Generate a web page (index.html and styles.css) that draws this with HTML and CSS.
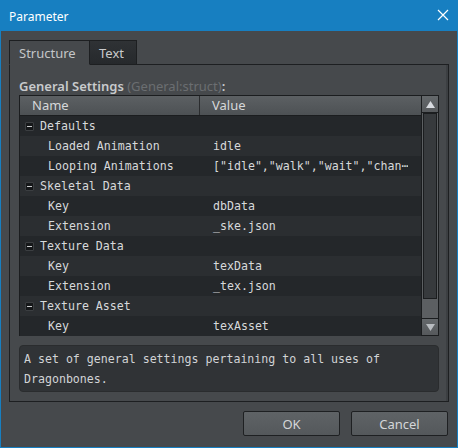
FILE: index.html
```html
<!DOCTYPE html>
<html>
<head>
<meta charset="utf-8">
<link rel="stylesheet" href="styles.css">
</head>
<body>
<div class="window">
  <div class="titlebar">
    <span class="title">Parameter</span>
    <svg class="close" width="12" height="12" viewBox="0 0 12 12"><path d="M1 1 L11 11 M11 1 L1 11" stroke="#ffffff" stroke-width="1.2" fill="none"/></svg>
  </div>
  <div class="content">
    <div class="tabs">
      <div class="tab active">Structure</div>
      <div class="tab">Text</div>
    </div>
    <div class="panel">
      <div class="label">General Settings <span class="type">(General:struct)</span>:</div>
      <div class="tree">
        <div class="tree-main">
          <div class="head">
            <div class="hname">Name</div>
            <div class="hvalue">Value</div>
          </div>
          <div class="row dark group"><div class="name"><span class="toggle"></span>Defaults</div><div class="value"></div></div>
          <div class="row light"><div class="name child">Loaded Animation</div><div class="value">idle</div></div>
          <div class="row dark"><div class="name child">Looping Animations</div><div class="value">["idle","walk","wait","chan⋯</div></div>
          <div class="row light group"><div class="name"><span class="toggle"></span>Skeletal Data</div><div class="value"></div></div>
          <div class="row dark"><div class="name child">Key</div><div class="value">dbData</div></div>
          <div class="row light"><div class="name child">Extension</div><div class="value">_ske.json</div></div>
          <div class="row dark group"><div class="name"><span class="toggle"></span>Texture Data</div><div class="value"></div></div>
          <div class="row light"><div class="name child">Key</div><div class="value">texData</div></div>
          <div class="row dark"><div class="name child">Extension</div><div class="value">_tex.json</div></div>
          <div class="row light group"><div class="name"><span class="toggle"></span>Texture Asset</div><div class="value"></div></div>
          <div class="row dark"><div class="name child">Key</div><div class="value">texAsset</div></div>
        </div>
        <div class="scrollbar">
          <div class="sbtn"><svg width="9" height="7" viewBox="0 0 9 7"><path d="M4.5 0 L9 7 L0 7 Z" fill="#d8dbe0"/></svg></div>
          <div class="track"><div class="thumb"></div></div>
          <div class="sbtn"><svg width="9" height="7" viewBox="0 0 9 7"><path d="M0 0 L9 0 L4.5 7 Z" fill="#b8bcc0"/></svg></div>
        </div>
      </div>
      <div class="desc">A set of general settings pertaining to all uses of<br>Dragonbones.</div>
    </div>
    <div class="buttons">
      <div class="btn">OK</div>
      <div class="btn">Cancel</div>
    </div>
  </div>
</div>
</body>
</html>
```

FILE: styles.css
```css
html, body {
  margin: 0;
  padding: 0;
  background: #46494c;
}
.window {
  width: 458px;
  height: 448px;
  box-sizing: border-box;
  border: 1px solid #177fc1;
  border-top: none;
  background: #46494c;
  display: flex;
  flex-direction: column;
}
.titlebar {
  height: 31px;
  background: #177fc1;
  margin: 0 -1px;
  display: flex;
  align-items: center;
  justify-content: space-between;
  padding: 0 9px 0 9px;
}
.title {
  font-family: "Noto Sans", "Open Sans", sans-serif;
  font-size: 12px;
  color: #ffffff;
  margin-top: 1px;
}
.close {
  margin-top: -1px;
}
.content {
  padding: 9px 8px 0 8px;
  display: flex;
  flex-direction: column;
}
.tabs {
  display: flex;
  height: 25px;
  position: relative;
  z-index: 1;
  margin-bottom: -1px;
}
.tab {
  font-family: "Noto Sans", "Open Sans", sans-serif;
  font-size: 13px;
  color: #c4c6c8;
  border: 1px solid #1d1f21;
  display: flex;
  align-items: center;
  padding: 0 9px;
  box-sizing: border-box;
}
.tab.active {
  width: 81px;
  background: #46494c;
  border-bottom-color: #46494c;
}
.tab:not(.active) {
  width: 47px;
  height: 25px;
  border-left: none;
  background: linear-gradient(#2f3235, #26292c);
  color: #c8cacc;
}
.panel {
  border: 1px solid #1d1f21;
  box-shadow: inset -2px 0 0 #3c3f42;
  background: #46494c;
  padding: 12px 9px 9px 9px;
  display: flex;
  flex-direction: column;
}
.label {
  height: 18px;
  line-height: 18px;
  font-family: "Noto Sans", "Open Sans", sans-serif;
  font-size: 13px;
  font-weight: 600;
  color: #c9cbcd;
}
.label .type {
  font-weight: 400;
  color: #6b6e71;
}
.tree {
  display: flex;
  border: 1px solid #1b1d1f;
  height: 241px;
  box-sizing: border-box;
}
.tree-main {
  flex: 1;
  display: flex;
  flex-direction: column;
  background: #2a2d30;
}
.head {
  display: flex;
  height: 20px;
  box-sizing: border-box;
  border-bottom: 1px solid #1b1d1f;
  background: linear-gradient(#5c6063, #4d5154);
  font-family: "Noto Sans", "Open Sans", sans-serif;
  font-size: 13px;
  color: #d6d8da;
  line-height: 19px;
}
.hname {
  width: 180px;
  box-sizing: border-box;
  padding-left: 12px;
  border-right: 1px solid #2a2c2e;
}
.hvalue {
  padding-left: 12px;
}
.row {
  display: flex;
  height: 20px;
  line-height: 20px;
  font-family: "DejaVu Sans Mono", "Liberation Mono", monospace;
  font-size: 11.6px;
  color: #d7d9db;
}
.row.dark { background: #24272a; }
.row.light { background: #2b2e31; }
.name {
  width: 180px;
  display: flex;
  align-items: center;
  padding-left: 5px;
  box-sizing: border-box;
  white-space: nowrap;
}
.name.child {
  padding-left: 28px;
}
.value {
  padding-left: 13px;
  white-space: nowrap;
  overflow: hidden;
}
.toggle {
  width: 9px;
  height: 9px;
  box-sizing: border-box;
  background: #16181a;
  border: 1px solid #3b3e41;
  border-radius: 1px;
  margin-right: 6px;
  position: relative;
}
.toggle::after {
  content: "";
  position: absolute;
  left: 1px;
  top: 3px;
  width: 5px;
  height: 1px;
  background: #c8cacc;
}
.scrollbar {
  width: 16px;
  border-left: 1px solid #1b1d1f;
  display: flex;
  flex-direction: column;
  background: #5c5f62;
}
.sbtn {
  height: 16px;
  display: flex;
  align-items: center;
  justify-content: center;
  background: linear-gradient(#64686b, #56595c);
}
.sbtn:first-child {
  border-bottom: 1px solid #1b1d1f;
}
.sbtn:last-child {
  border-top: 1px solid #1b1d1f;
}
.track {
  flex: 1;
  padding: 0 1px 0 1px;
  display: flex;
  flex-direction: column;
}
.thumb {
  height: 186px;
  box-sizing: border-box;
  border: 1px solid #1b1d1f;
  background: #373a3d;
}
.desc {
  margin-top: 9px;
  height: 47px;
  box-sizing: border-box;
  border: 1px solid #2a2c2e;
  border-radius: 4px;
  background: #303336;
  padding: 3px 4px;
  font-family: "DejaVu Sans Mono", "Liberation Mono", monospace;
  font-size: 11.6px;
  line-height: 20px;
  color: #d2d4d6;
}
.buttons {
  display: flex;
  justify-content: flex-end;
  gap: 11px;
  margin-top: 9px;
  padding-right: 1px;
}
.btn {
  width: 97px;
  height: 25px;
  box-sizing: border-box;
  border: 1px solid #1e2022;
  border-radius: 2px;
  background: linear-gradient(#5f6366, #54585b);
  display: flex;
  align-items: center;
  justify-content: center;
  font-family: "Noto Sans", "Open Sans", sans-serif;
  font-size: 13px;
  color: #d4d6d8;
}
```
